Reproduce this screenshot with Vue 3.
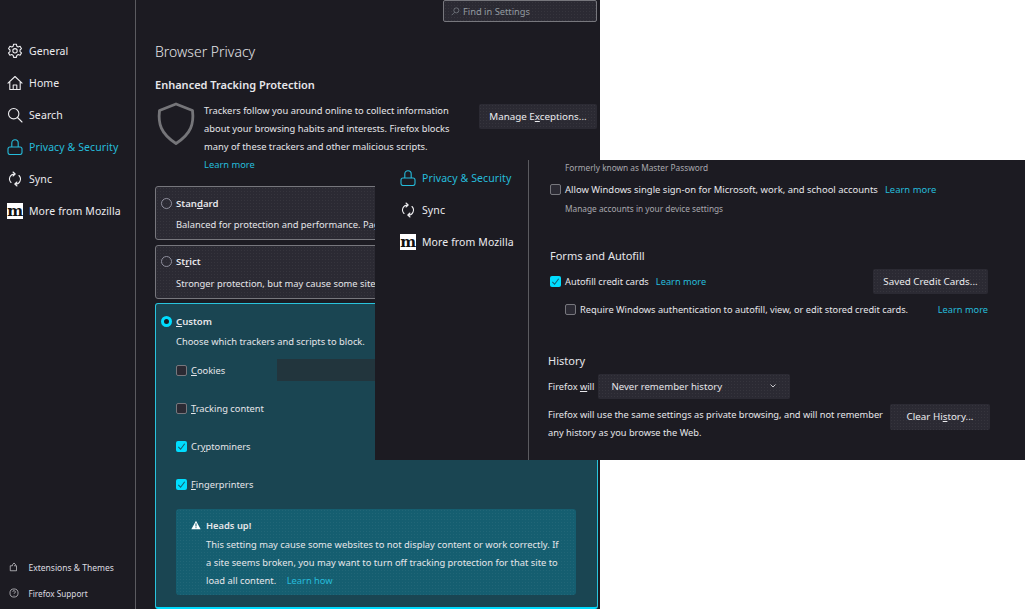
<template>
  <div class="desktop">
    <!-- back window -->
    <section class="window back">
      <aside class="sidebar">
        <nav class="nav">
          <a v-for="item in navItems" :key="item.label" class="nav-item" :class="{ active: item.active }">
            <span v-if="item.logo" class="moz-logo">m</span>
            <svg v-else class="nav-icon" viewBox="0 0 16 16">
              <path :d="item.icon" />
            </svg>
            {{ item.label }}
          </a>
        </nav>
        <div class="side-footer">
          <a class="foot-item">
            <svg class="foot-icon" viewBox="0 0 16 16">
              <path d="M2 6h3.500V4.500L8 1.500l2.500 2.800L8.700 6H12v8H2z" />
            </svg>
            <span class="ext-label">Extensions &amp; Themes</span>
          </a>
          <a class="foot-item">
            <svg class="foot-icon" viewBox="0 0 16 16">
              <circle cx="8" cy="8" r="6.500" />
              <path d="M6 6.200a2 2 0 1 1 3 1.800c-.7.4-1 .8-1 1.600M8 11.200v.8" />
            </svg>
            Firefox Support
          </a>
        </div>
      </aside>

      <main class="content">
        <div class="search-row">
          <div class="find dither">
            <svg class="find-icon" viewBox="0 0 16 16">
              <circle cx="9.500" cy="6" r="4.500" />
              <path d="M6.200 9.500 1.500 14.500" />
            </svg>
            Find in Settings
          </div>
        </div>
        <h1>Browser Privacy</h1>
        <h2>Enhanced Tracking Protection</h2>
        <div class="etp">
          <svg class="shield" viewBox="0 0 40 44">
            <path d="M20 2 36.500 8.500c1.500 13-1 23-16.500 33C4.500 31.500 2 21.500 3.500 8.500z" />
          </svg>
          <p class="etp-text">
            Trackers follow you around online to collect information about your browsing habits and interests. Firefox blocks many of these trackers and other malicious scripts.<br />
            <a class="link">Learn more</a>
          </p>
          <button class="btn dither exceptions">Manage E<u>x</u>ceptions...</button>
        </div>

        <div class="card dither">
          <div class="card-title"><span class="radio"></span><b>Stan<u>d</u>ard</b></div>
          <p class="card-desc">Balanced for protection and performance. Pages will load normally.</p>
        </div>
        <div class="card dither">
          <div class="card-title"><span class="radio"></span><b>St<u>r</u>ict</b></div>
          <p class="card-desc">Stronger protection, but may cause some sites or content to break.</p>
        </div>
        <div class="card custom">
          <div class="card-title"><span class="radio on"></span><b><u>C</u>ustom</b></div>
          <p class="card-desc">Choose which trackers and scripts to block.</p>
          <div class="blockers">
            <label v-for="row in blockers" :key="row.rest" class="block-row">
              <span class="check" :class="{ on: row.checked }">
                <svg v-if="row.checked" viewBox="0 0 12 12"><path d="M2.500 6.500 5 9l4.500-6" /></svg>
              </span>
              <span>{{ row.before }}<u>{{ row.key }}</u>{{ row.rest }}</span>
              <span v-if="row.select" class="fake-select"></span>
            </label>
          </div>
          <div class="heads-up dither">
            <div class="heads-title">
              <svg class="warn" viewBox="0 0 12 12">
                <path d="M6 .8 11.600 11H.4z" />
                <rect x="5.400" y="4" width="1.200" height="3.800" fill="#155e70" />
                <rect x="5.400" y="8.600" width="1.200" height="1.200" fill="#155e70" />
              </svg>
              <b>Heads up!</b>
            </div>
            <p>This setting may cause some websites to not display content or work correctly. If a site seems broken, you may want to turn off tracking protection for that site to load all content. <a class="link learn-how">Learn how</a></p>
          </div>
        </div>
      </main>
    </section>

    <!-- front window -->
    <section class="window front">
      <aside class="sidebar">
        <nav class="nav">
          <a v-for="item in navItems.slice(3)" :key="item.label" class="nav-item" :class="{ active: item.active }">
            <span v-if="item.logo" class="moz-logo">m</span>
            <svg v-else class="nav-icon" viewBox="0 0 16 16">
              <path :d="item.icon" />
            </svg>
            {{ item.label }}
          </a>
        </nav>
      </aside>

      <main class="content">
        <p class="muted first">Formerly known as Master Password</p>
        <label class="opt-row sso">
          <span class="check"></span>
          Allow Windows single sign-on for Microsoft, work, and school accounts
          <a class="link">Learn more</a>
        </label>
        <p class="muted manage">Manage accounts in your device settings</p>

        <h3 class="forms-title">Forms and Autofill</h3>
        <div class="opt-row autofill">
          <span class="check on">
            <svg viewBox="0 0 12 12"><path d="M2.500 6.500 5 9l4.500-6" /></svg>
          </span>
          Autofill credit cards
          <a class="link">Learn more</a>
          <button class="btn dither saved">Saved Credit Cards...</button>
        </div>
        <div class="opt-row require">
          <span class="check"></span>
          Require Windows authentication to autofill, view, or edit stored credit cards.
          <a class="link push">Learn more</a>
        </div>

        <h3 class="history-title">History</h3>
        <div class="will-row">
          <span>Firefox <u>w</u>ill</span>
          <div class="select dither">
            Never remember history
            <svg class="chev" viewBox="0 0 8 8"><path d="M1.500 2.500 4 5l2.500-2.500" /></svg>
          </div>
        </div>
        <div class="history-desc">
          <p>Firefox will use the same settings as private browsing, and will not remember any history as you browse the Web.</p>
          <button class="btn dither clear">Clear Hi<u>s</u>tory...</button>
        </div>
      </main>
    </section>
  </div>
</template>

<script setup>
const navItems = [
  {
    label: 'General',
    icon: 'M6.600 1.200h2.800l.4 2 1.400.8 1.900-.7 1.400 2.400-1.500 1.300v1.600l1.500 1.300-1.400 2.400-1.900-.7-1.400.8-.4 2H6.600l-.4-2-1.400-.8-1.900.7-1.400-2.400L3 8.600V7L1.500 5.700l1.400-2.400 1.900.7 1.400-.8zM8 5.600a2.200 2.200 0 1 0 0 4.400 2.200 2.200 0 0 0 0-4.400z',
  },
  {
    label: 'Home',
    icon: 'M1 8.200 8 1.500l7 6.700M2.800 6.800v7.700h10.400V6.800M6.200 14.500V10h3.600v4.500',
  },
  {
    label: 'Search',
    icon: 'M6.700 1.500a5.200 5.200 0 1 0 0 10.400 5.200 5.200 0 0 0 0-10.400zM10.500 10.500 15 15',
  },
  {
    label: 'Privacy & Security',
    active: true,
    icon: 'M3 8h10a2 2 0 0 1 2 2v3.500a2 2 0 0 1-2 2H3a2 2 0 0 1-2-2V10a2 2 0 0 1 2-2zM4.800 8V4a3.200 3.200 0 0 1 6.400 0v4',
  },
  {
    label: 'Sync',
    icon: 'M4 11.500A5 5 0 0 1 8 3M12 4.500A5 5 0 0 1 8 13M6 1l2.200 2L6 5M10 15l-2.200-2L10 11',
  },
  { label: 'More from Mozilla', logo: true },
];

const blockers = [
  { before: '', key: 'C', rest: 'ookies', checked: false, select: true },
  { before: '', key: 'T', rest: 'racking content', checked: false },
  { before: 'Cr', key: 'y', rest: 'ptominers', checked: true },
  { before: '', key: 'F', rest: 'ingerprinters', checked: true },
];
</script>

<style>
html,
body {
  margin: 0;
  background: #fff;
}
</style>

<style scoped>
.desktop {
  position: relative;
  width: 1025px;
  height: 609px;
  overflow: hidden;
  background: #fff;
  font-family: "Noto Sans", "Open Sans", sans-serif;
  font-size: 10.5px;
  color: #e6e6ea;
}
.window {
  position: absolute;
  display: flex;
  box-sizing: border-box;
  background: #1c1b22;
  overflow: hidden;
}
.back {
  left: 0;
  top: 0;
  width: 600px;
  height: 609px;
}
.front {
  left: 375px;
  top: 160px;
  width: 650px;
  height: 300px;
}
p,
h1,
h2,
h3 {
  margin: 0;
}
u {
  text-underline-offset: 1px;
}
.dither {
  background-image: radial-gradient(rgba(255, 255, 255, 0.05) 0.5px, transparent 0.6px);
  background-size: 3px 3px;
}
.sidebar {
  display: flex;
  flex-direction: column;
  justify-content: space-between;
  box-sizing: border-box;
  flex: none;
  border-right: 1px solid #5b5b60;
}
.back .sidebar {
  width: 136px;
  padding: 35px 0 3px 7px;
}
.front .sidebar {
  width: 154px;
  padding: 2px 0 0 25px;
}
.nav {
  display: flex;
  flex-direction: column;
}
.nav-item {
  display: flex;
  align-items: center;
  gap: 6px;
  height: 32px;
  font-size: 10.500px;
  letter-spacing: 0.1px;
  white-space: nowrap;
  color: #ececef;
}
.nav-item.active {
  color: #25bcdb;
}
.nav-icon {
  flex: none;
  width: 16px;
  height: 16px;
  fill: none;
  stroke: currentColor;
  stroke-width: 1.100;
  stroke-linejoin: round;
  stroke-linecap: round;
}
.moz-logo {
  flex: none;
  display: flex;
  align-items: center;
  justify-content: center;
  width: 16px;
  height: 16px;
  overflow: hidden;
  background: #fff;
  color: #111;
  font-family: "DejaVu Serif", serif;
  font-weight: 700;
  font-size: 15px;
  line-height: 14px;
  letter-spacing: -0.5px;
}
.side-footer {
  display: flex;
  flex-direction: column;
  padding-left: 2px;
}
.foot-item {
  display: flex;
  align-items: center;
  gap: 9.500px;
  height: 26px;
  font-size: 8.200px;
  color: #dcdce0;
  white-space: nowrap;
}
.ext-label {
  font-size: 8.500px;
}
.foot-icon {
  flex: none;
  width: 10px;
  height: 10px;
  fill: none;
  stroke: currentColor;
  stroke-width: 1.100;
}
.back .content {
  flex: 1;
  min-width: 0;
  box-sizing: border-box;
  padding: 0 2px 0 19px;
}
.search-row {
  display: flex;
  justify-content: flex-end;
  height: 22px;
  padding-right: 1px;
}
.find {
  display: flex;
  align-items: center;
  gap: 3px;
  box-sizing: border-box;
  width: 154px;
  height: 22px;
  padding-left: 7px;
  background-color: #2b2a33;
  border: 1px solid #77777d;
  border-radius: 2px;
  font-size: 9.300px;
  color: #939aa0;
}
.find-icon {
  width: 9px;
  height: 9px;
  fill: none;
  stroke: #939aa0;
}
h1 {
  margin-top: 21px;
  font-size: 14px;
  font-weight: 300;
  line-height: 18px;
  color: #e4e4e8;
}
h2 {
  margin-top: 16px;
  font-size: 11px;
  font-weight: 600;
  line-height: 16px;
}
.etp {
  display: flex;
  align-items: flex-start;
  height: 84px;
  margin-top: 9px;
}
.shield {
  flex: none;
  width: 40px;
  height: 44px;
  margin: 0 8px 0 1px;
  fill: none;
  stroke: #757579;
  stroke-width: 2.800;
  stroke-linejoin: round;
}
.etp-text {
  width: 262px;
  flex: none;
  line-height: 18px;
  font-size: 9.350px;
}
.link {
  color: #25bcdb;
}
.btn {
  flex: none;
  box-sizing: border-box;
  height: 25px;
  padding: 0;
  border: 0;
  border-radius: 2px;
  background-color: #2b2a33;
  color: #ececef;
  font: inherit;
  font-size: 9.800px;
  white-space: nowrap;
}
.exceptions {
  width: 118px;
  margin: 2px 0 0 13px;
}
.card {
  box-sizing: border-box;
  height: 54px;
  margin-bottom: 4.500px;
  padding: 7px 0 0 5px;
  background-color: #2b2a33;
  border: 1px solid #77777d;
  border-radius: 3px;
}
.card-title {
  display: flex;
  align-items: center;
  gap: 4px;
  height: 18px;
  font-size: 9.600px;
}
.card-title b {
  font-weight: 600;
}
.card-desc {
  margin: 6px 0 0 15px;
  font-size: 9.350px;
  line-height: 14px;
  white-space: nowrap;
}
.radio {
  flex: none;
  box-sizing: border-box;
  width: 11px;
  height: 11px;
  border: 1px solid #8f8f9d;
  border-radius: 50%;
}
.radio.on {
  border: 3px solid #00ddff;
  background: #1c1b22;
}
.custom {
  height: 306px;
  margin: 0;
  padding-top: 8px;
  background: #1a4552;
  border-color: #29c4dd;
  border-bottom: 2px solid #00ddff;
}
.custom .card-desc {
  margin-top: 5px;
}
.blockers {
  display: flex;
  flex-direction: column;
  margin: 2px 0 0 15px;
}
.block-row {
  position: relative;
  display: flex;
  align-items: center;
  gap: 4px;
  height: 38px;
  font-size: 9.300px;
}
.fake-select {
  width: 100px;
  height: 22px;
  margin-left: 48px;
  background: #22353d;
}
.check {
  flex: none;
  box-sizing: border-box;
  display: inline-block;
  width: 11px;
  height: 11px;
  border: 1px solid #77777d;
  border-radius: 2px;
  background: #2b2a33;
}
.check.on {
  border: 0;
  background: #00ddff;
}
.check svg {
  display: block;
  width: 11px;
  height: 11px;
  fill: none;
  stroke: #155e70;
  stroke-width: 1.200;
}
.heads-up {
  box-sizing: border-box;
  width: 400px;
  height: 86px;
  margin: 6px 0 0 15px;
  padding: 8px 0 0 15px;
  background-color: #155e70;
  border-radius: 3px;
  font-size: 9.350px;
}
.heads-title {
  display: flex;
  align-items: center;
  gap: 5px;
  height: 16px;
}
.heads-title b {
  font-weight: 600;
}
.warn {
  width: 10px;
  height: 10px;
  fill: #fff;
}
.heads-up p {
  margin: 3px 0 0 15px;
  width: 358px;
  line-height: 18px;
}
.learn-how {
  margin-left: 8px;
}
.front .content {
  flex: 1;
  min-width: 0;
  box-sizing: border-box;
  padding: 0 0 0 19px;
  font-size: 9.450px;
}
.muted {
  font-size: 8.300px;
  color: #a8a8ae;
}
.first {
  height: 16px;
  padding: 1px 0 0 17px;
  line-height: 14px;
}
.opt-row {
  display: flex;
  align-items: center;
  gap: 4px;
  white-space: nowrap;
}
.opt-row .link {
  margin-left: 3px;
}
.sso {
  height: 21px;
  margin: 1.500px 0 0 2px;
}
.manage {
  height: 14px;
  margin: 2.500px 0 0 17px;
  line-height: 14px;
}
.forms-title {
  margin: 32px 0 0 2px;
  font-size: 11px;
  font-weight: 400;
  line-height: 16px;
}
.autofill {
  height: 25px;
  margin: 4.500px 0 0 2px;
  font-size: 9.250px;
}
.saved {
  width: 115px;
  margin-left: auto;
  margin-right: 37px;
}
.require {
  height: 16px;
  margin: 8px 37px 0 17px;
  font-size: 9.250px;
}
.push {
  margin-left: auto !important;
}
.history-title {
  margin: 35.500px 0 0 0;
  font-size: 11px;
  font-weight: 400;
  line-height: 16px;
}
.will-row {
  display: flex;
  align-items: center;
  gap: 4px;
  height: 25px;
  margin-top: 4.500px;
  font-size: 9.250px;
}
.select {
  display: flex;
  align-items: center;
  justify-content: space-between;
  box-sizing: border-box;
  width: 192px;
  height: 25px;
  padding: 0 13px;
  background-color: #2b2a33;
  border-radius: 2px;
  font-size: 9.600px;
}
.chev {
  width: 8px;
  height: 8px;
  fill: none;
  stroke: #c8c8cc;
}
.history-desc {
  display: flex;
  align-items: flex-start;
  margin-top: 5px;
}
.history-desc p {
  width: 342px;
  flex: none;
  margin-top: 2.500px;
  line-height: 18px;
  font-size: 9.250px;
}
.clear {
  width: 100px;
  height: 26px;
}
</style>
